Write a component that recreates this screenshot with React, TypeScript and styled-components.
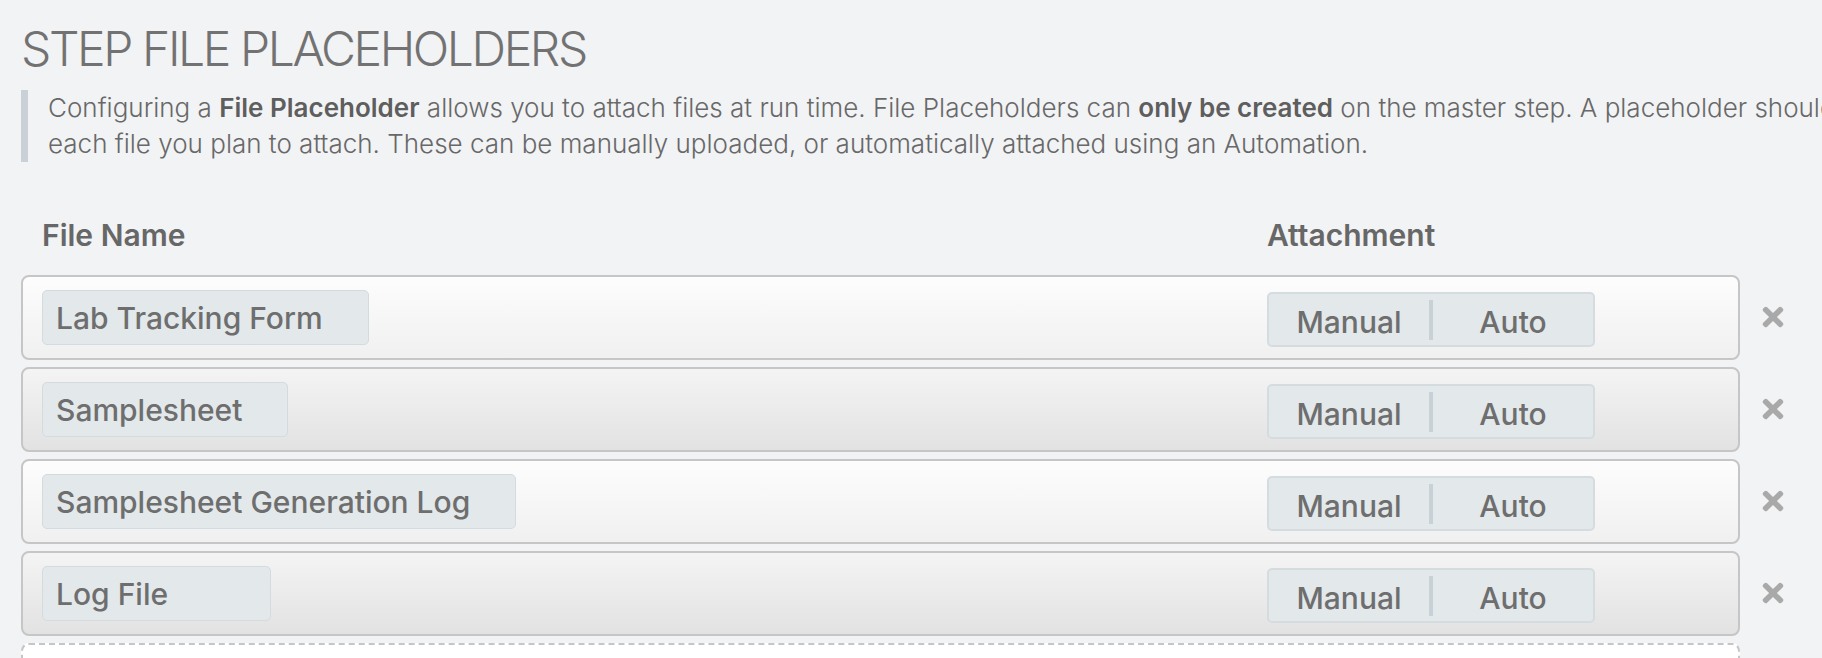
import styled, { createGlobalStyle } from "styled-components";
import { FaTimes } from "react-icons/fa";

const GlobalStyle = createGlobalStyle`
  html, body {
    margin: 0;
    padding: 0;
    background: #f2f3f5;
    overflow: hidden;
  }
  body {
    font-family: Inter, "Noto Sans", sans-serif;
    color: #6b6b6b;
  }
`;

const placeholders = [
  { name: "Lab Tracking Form" },
  { name: "Samplesheet" },
  { name: "Samplesheet Generation Log" },
  { name: "Log File" },
];

export default function App() {
  return (
    <>
      <GlobalStyle />
      <Page>
        <Title>STEP FILE PLACEHOLDERS</Title>
        <Note>
          Configuring a <b>File Placeholder</b> allows you to attach files at
          run time. File Placeholders can <b>only be created</b> on the master
          step. A placeholder should be created for
          <br />
          each file you plan to attach. These can be manually uploaded, or
          automatically attached using an Automation.
        </Note>
        <Table>
          <HeaderRow>
            <HeaderCell>File Name</HeaderCell>
            <HeaderCell>Attachment</HeaderCell>
          </HeaderRow>
          <span />
          {placeholders.map((p, index) => (
            <RowGroup key={p.name}>
              <Row $alt={index % 2 === 1}>
                <div>
                  <NameInput>{p.name}</NameInput>
                </div>
                <Toggle>
                  <ToggleOption>Manual</ToggleOption>
                  <ToggleDivider />
                  <ToggleOption>Auto</ToggleOption>
                </Toggle>
              </Row>
              <RemoveButton>
                <FaTimes />
              </RemoveButton>
            </RowGroup>
          ))}
          <NewRow />
        </Table>
      </Page>
    </>
  );
}

const Page = styled.div`
  padding: 20px 16px 0 21px;
  width: 1822px;
  box-sizing: border-box;
`;

const Title = styled.h1`
  margin: 0;
  font-size: 48px;
  line-height: 1.2;
  font-weight: 300;
  letter-spacing: -2.4px;
  color: #727272;
`;

const Note = styled.div`
  margin-top: 12px;
  border-left: 7px solid #c9d0d7;
  padding-left: 20px;
  font-size: 26px;
  line-height: 36px;
  font-weight: 300;
  color: #686868;
  white-space: nowrap;

  b {
    font-weight: 600;
    color: #5e5e5e;
  }
`;

const Table = styled.div`
  margin-top: 55px;
  display: grid;
  grid-template-columns: 1fr 66px;
  row-gap: 7px;
`;

const HeaderRow = styled.div`
  display: grid;
  grid-template-columns: 1fr 473px;
  padding-left: 21px;
  margin-bottom: 15px;
`;

const HeaderCell = styled.div`
  font-size: 30px;
  line-height: 36px;
  font-weight: 600;
  color: #676767;
`;

const RowGroup = styled.div`
  display: contents;
`;

const Row = styled.div<{ $alt: boolean }>`
  display: grid;
  grid-template-columns: 1fr 471px;
  align-items: center;
  height: 85px;
  box-sizing: border-box;
  padding-left: 19px;
  border: 2px solid #c6c6c6;
  border-radius: 8px;
  background: ${(p) =>
    p.$alt
      ? "linear-gradient(#f4f4f4, #e2e2e2)"
      : "linear-gradient(#fdfdfd, #f0f0f0)"};
`;

const NameInput = styled.div`
  display: inline-block;
  box-sizing: border-box;
  min-width: 229px;
  height: 55px;
  padding: 2px 45px 0 13px;
  border: 1px solid #d3dbdf;
  border-radius: 5px;
  background: #e3e8eb;
  font-size: 30px;
  font-weight: 500;
  line-height: 51px;
  color: #6e6e6e;
  white-space: nowrap;
`;

const Toggle = styled.div`
  display: flex;
  align-items: center;
  width: 328px;
  height: 55px;
  margin-top: 5px;
  box-sizing: border-box;
  border: 2px solid #d5dce0;
  border-radius: 5px;
  background: #e3e8eb;
`;

const ToggleOption = styled.div`
  flex: 1;
  text-align: center;
  font-size: 30px;
  font-weight: 500;
  color: #6e6e6e;
  padding-top: 4px;
`;

const ToggleDivider = styled.div`
  width: 4px;
  height: 40px;
  background: #c8d1d7;
`;

const RemoveButton = styled.div`
  display: flex;
  align-items: center;
  justify-content: center;
  font-size: 30px;
  color: #a9a9a9;
`;

const NewRow = styled.div`
  height: 90px;
  box-sizing: border-box;
  border: 2px dashed #c6c6c6;
  border-radius: 8px;
  background: #ffffff;
`;
